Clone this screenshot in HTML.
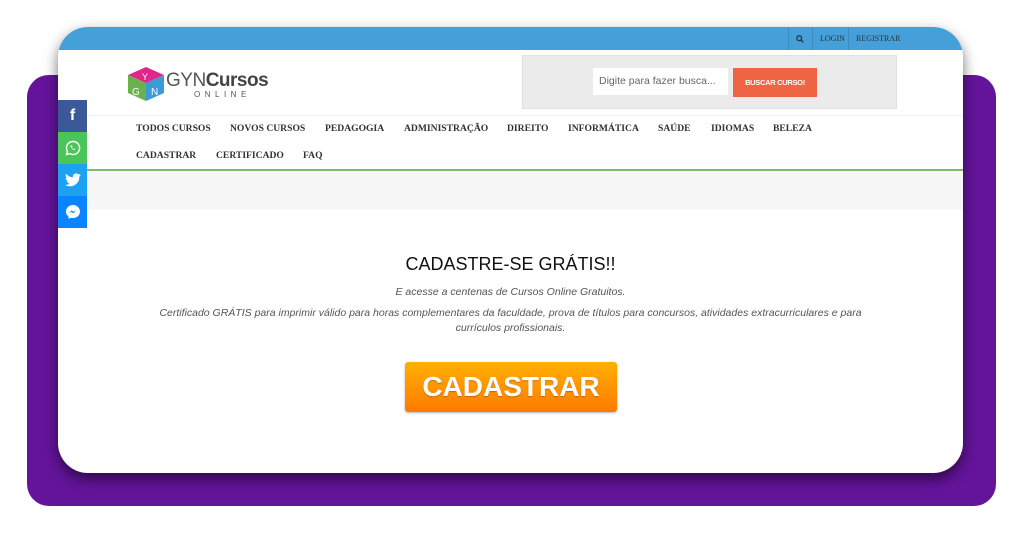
<!DOCTYPE html>
<html><head><meta charset="utf-8"><style>
*{margin:0;padding:0;box-sizing:border-box}
body{width:1024px;height:536px;background:#fff;position:relative;overflow:hidden;font-family:"Liberation Sans",sans-serif}
.purple{position:absolute;left:27px;top:75px;width:969px;height:431px;background:#64149b;border-radius:22px}
.card{position:absolute;left:58px;top:27px;width:905px;height:446px;background:#fff;border-radius:30px;overflow:hidden;box-shadow:0 6px 14px rgba(0,0,0,.55)}
.top{position:absolute;left:0;top:0;width:905px;height:23px;background:#459fd8}
.tl{position:absolute;top:0;height:23px;font:8px "Liberation Serif",serif;color:#333;line-height:23px;border-left:1px solid #3b8cc0;padding:0 7px}
.nav{position:absolute;font:bold 9.6px "Liberation Serif",serif;color:#333}
.ab{position:absolute}
.soc{position:absolute;left:58px;width:29px;height:32px;display:flex;align-items:center;justify-content:center}
</style></head><body>
<div class="purple"></div>
<div class="card">
 <div class="top"></div>
 <div class="tl" style="left:730px;width:24px;font-weight:bold">
  <svg width="8" height="8" viewBox="0 0 10 10" style="margin-top:8px"><circle cx="4" cy="4" r="3" fill="none" stroke="#333" stroke-width="1.6"/><path d="M6 6l3 3" stroke="#333" stroke-width="1.8"/></svg></div>
 <div class="tl" style="left:754px">LOGIN</div>
 <div class="tl" style="left:790px">REGISTRAR</div>
 <svg class="ab" style="left:68px;top:38px" width="40" height="38" viewBox="0 0 40 38">
  <polygon points="20,2 38,10 20,18 2,10" fill="#e0268a"/>
  <polygon points="2,10 20,18 20,36 2,28" fill="#6ab04c"/>
  <polygon points="20,18 38,10 38,28 20,36" fill="#3c9ad6"/>
  <text x="16" y="15" font-size="9" fill="#fff" font-family="Liberation Sans">Y</text>
  <text x="6" y="30" font-size="10" fill="#fff" font-family="Liberation Sans">G</text>
  <text x="25" y="30" font-size="10" fill="#fff" font-family="Liberation Sans">N</text>
 </svg>
 <div class="ab" style="left:108px;top:43px;font-size:19px;color:#555;letter-spacing:-0.5px">GYN<b style="color:#444">Cursos</b></div>
 <div class="ab" style="left:136px;top:63px;font-size:8px;color:#555;letter-spacing:4.5px">ONLINE</div>
 <div class="ab" style="left:464px;top:28px;width:375px;height:54px;background:#ebebeb;border:1px solid #e0e0e0"></div>
 <div class="ab" style="left:535px;top:41px;width:135px;height:27px;background:#fff;font-size:10.5px;color:#666;padding:7px 6px">Digite para fazer busca...</div>
 <div class="ab" style="left:675px;top:41px;width:84px;height:29px;background:#ef6443;color:#fff;font-size:7.5px;font-weight:bold;text-align:center;line-height:29px;letter-spacing:-0.3px">BUSCAR CURSO!</div>
 <div class="ab" style="left:0;top:88px;width:905px;height:1px;background:#eee"></div>
 <div class="nav" style="left:78px;top:96px">TODOS CURSOS</div>
 <div class="nav" style="left:172px;top:96px">NOVOS CURSOS</div>
 <div class="nav" style="left:267px;top:96px">PEDAGOGIA</div>
 <div class="nav" style="left:346px;top:96px">ADMINISTRAÇÃO</div>
 <div class="nav" style="left:449px;top:96px">DIREITO</div>
 <div class="nav" style="left:510px;top:96px">INFORMÁTICA</div>
 <div class="nav" style="left:600px;top:96px">SAÚDE</div>
 <div class="nav" style="left:653px;top:96px">IDIOMAS</div>
 <div class="nav" style="left:715px;top:96px">BELEZA</div>
 <div class="nav" style="left:78px;top:123px">CADASTRAR</div>
 <div class="nav" style="left:158px;top:123px">CERTIFICADO</div>
 <div class="nav" style="left:245px;top:123px">FAQ</div>
 <div class="ab" style="left:0;top:142px;width:905px;height:2px;background:#7cbd68"></div>
 <div class="ab" style="left:0;top:144px;width:905px;height:39px;background:#f7f7f7"></div>
 <div class="ab" style="left:0;top:227px;width:905px;text-align:center;font-size:18px;color:#111">CADASTRE-SE GRÁTIS!!</div>
 <div class="ab" style="left:0;top:259px;width:905px;text-align:center;font-size:10.5px;font-style:italic;color:#555">E acesse a centenas de Cursos Online Gratuitos.</div>
 <div class="ab" style="left:95px;top:279px;width:715px;text-align:center;font-size:10.5px;font-style:italic;color:#555;line-height:15px">Certificado GRÁTIS para imprimir válido para horas complementares da faculdade, prova de títulos para concursos, atividades extracurriculares e para currículos profissionais.</div>
 <div class="ab" style="left:347px;top:335px;width:212px;height:50px;border-radius:3px;background:linear-gradient(#ffb000,#ff7a00);box-shadow:0 1px 2px rgba(0,0,0,.3);color:#fff;font-weight:bold;font-size:28px;text-align:center;line-height:50px;text-shadow:0 1px 1px rgba(150,60,0,.5)">CADASTRAR</div>
</div>
<div class="soc" style="top:100px;background:#3b5998"><span style="color:#fff;font-weight:bold;font-size:16px">f</span></div>
<div class="soc" style="top:132px;background:#4bc45a"><svg width="16" height="16" viewBox="0 0 16 16"><path d="M8 1.5a6.5 6.5 0 0 0-5.6 9.8L1.5 14.5l3.3-.9A6.5 6.5 0 1 0 8 1.5z" fill="none" stroke="#fff" stroke-width="1.4"/><path d="M6 5c-.5.4-.6 1.4.2 2.6s2 2.2 3 2.3c.6 0 1-.4 1-.8l-1-.6-.6.5c-.6-.2-1.300-.9-1.600-1.6l.5-.6-.5-1z" fill="#fff"/></svg></div>
<div class="soc" style="top:164px;background:#1da1f2"><svg width="16" height="14" viewBox="0 0 24 20"><path d="M24 2.4c-.9.4-1.8.7-2.8.8 1-.6 1.8-1.6 2.2-2.7-1 .6-2 1-3.1 1.2A4.9 4.9 0 0 0 11.9 6 14 14 0 0 1 1.7.9a4.9 4.9 0 0 0 1.5 6.6c-.8 0-1.6-.3-2.2-.6 0 2.4 1.7 4.4 3.9 4.8-.7.2-1.5.2-2.2.1.6 2 2.4 3.4 4.6 3.4A9.9 9.9 0 0 1 0 17.3 14 14 0 0 0 7.5 19.5c9 0 14-7.5 14-14v-.6c1-.7 1.8-1.600 2.500-2.500z" fill="#fff"/></svg></div>
<div class="soc" style="top:196px;background:#0a84ff"><svg width="16" height="16" viewBox="0 0 16 16"><path d="M8 1C4 1 1 4 1 7.6c0 2 1 3.8 2.6 5V15l2.3-1.3c.7.2 1.4.3 2.1.3 4 0 7-3 7-6.4S12 1 8 1z" fill="#fff"/><path d="M3.8 9.5l3-3.2 1.6 1.6 2.9-1.6-3 3.2-1.6-1.6z" fill="#0a84ff"/></svg></div>
</body></html>
